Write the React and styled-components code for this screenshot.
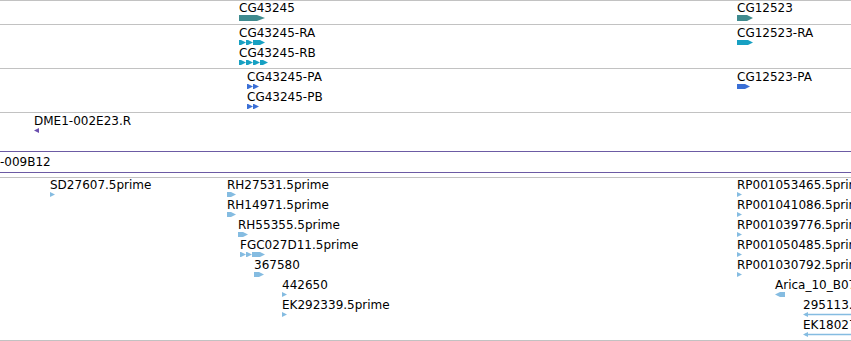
import React from 'react';
import styled, { createGlobalStyle } from 'styled-components';

const GlobalStyle = createGlobalStyle`
  html, body {
    margin: 0;
    padding: 0;
    background: #fff;
  }
  body {
    font-family: "DejaVu Sans", "Liberation Sans", sans-serif;
  }
`;

const TEAL = '#3f8b8f';
const CYAN = '#17a0c2';
const BLUE = '#3a6fd6';
const PURPLE = '#6a4eae';
const EST = '#85bce1';

const Browser = styled.div`
  width: 851px;
  height: 341px;
  overflow: hidden;
  border-top: 1px solid #c2c2c2;
  box-sizing: border-box;
  display: flex;
  flex-direction: column;
  background: #fff;
`;

const Track = styled.div`
  position: relative;
  flex: none;
  height: ${(p) => p.$h}px;
  border-bottom: 1px solid #c2c2c2;
  overflow: hidden;
`;

const Feature = styled.div`
  position: absolute;
  display: flex;
  flex-direction: column;
  align-items: flex-start;
`;

const Label = styled.span`
  font-size: 12px;
  line-height: 14px;
  color: #000;
  white-space: nowrap;
`;

const CloneBar = styled.div`
  position: absolute;
  top: 38px;
  left: 0;
  right: 0;
  height: 20px;
  border-top: 1px solid #6c5ba4;
  border-bottom: 1px solid #6c5ba4;
  font-size: 12px;
  line-height: 20px;
  color: #000;
  white-space: nowrap;
`;

// exon-ish segments: [x, width] relative to feature start
function Glyph({ segs, h = 5, color, dir = 1, tip = 5, line }) {
  const w = line || Math.max(...segs.map(([x, l]) => x + l));
  const m = h / 2;
  return (
    <svg width={w} height={h} style={{ display: 'block' }}>
      {line && <rect x={2} y={m - 0.75} width={w} height={1.5} fill={color} />}
      {segs.map(([x, l], i) => {
        const t = Math.min(tip, l);
        const pts =
          dir > 0
            ? `${x},0 ${x + l - t},0 ${x + l},${m} ${x + l - t},${h} ${x},${h}`
            : `${x + l},0 ${x + t},0 ${x},${m} ${x + t},${h} ${x + l},${h}`;
        return <polygon key={i} points={pts} fill={color} />;
      })}
    </svg>
  );
}

const tracks = [
  {
    h: 23,
    off: 0,
    features: [
      { x: 239, row: 0, label: 'CG43245', segs: [[0, 26]], color: TEAL, gh: 6, tip: 8 },
      { x: 737, row: 0, label: 'CG12523', segs: [[0, 16]], color: TEAL, gh: 6, tip: 6 },
    ],
  },
  {
    h: 43,
    off: 1,
    features: [
      { x: 239, row: 0, label: 'CG43245-RA', segs: [[0, 7], [7, 7], [14, 12]], color: CYAN },
      { x: 239, row: 1, label: 'CG43245-RB', segs: [[0, 7], [7, 7], [14, 7], [21, 8]], color: CYAN },
      { x: 737, row: 0, label: 'CG12523-RA', segs: [[0, 16]], color: CYAN },
    ],
  },
  {
    h: 43,
    off: 1,
    features: [
      { x: 247, row: 0, label: 'CG43245-PA', segs: [[0, 6], [6, 6]], color: BLUE },
      { x: 247, row: 1, label: 'CG43245-PB', segs: [[0, 6], [6, 6]], color: BLUE },
      { x: 737, row: 0, label: 'CG12523-PA', segs: [[0, 13]], color: BLUE },
    ],
  },
  {
    h: 64,
    off: 1,
    clone: '-009B12',
    features: [
      { x: 34, row: 0, label: 'DME1-002E23.R', segs: [[0, 5]], color: PURPLE, dir: -1 },
    ],
  },
  {
    h: 162,
    off: 0,
    features: [
      { x: 50, row: 0, label: 'SD27607.5prime', segs: [[0, 5]], color: EST },
      { x: 227, row: 0, label: 'RH27531.5prime', segs: [[0, 9]], color: EST },
      { x: 227, row: 1, label: 'RH14971.5prime', segs: [[0, 9]], color: EST },
      { x: 238, row: 2, label: 'RH55355.5prime', segs: [[0, 10]], color: EST },
      { x: 240, row: 3, label: 'FGC027D11.5prime', segs: [[0, 6], [6, 6], [12, 13]], color: EST },
      { x: 254, row: 4, label: '367580', segs: [[0, 10]], color: EST },
      { x: 282, row: 5, label: '442650', segs: [[0, 5]], color: EST },
      { x: 282, row: 6, label: 'EK292339.5prime', segs: [[0, 5]], color: EST },
      { x: 737, row: 0, label: 'RP001053465.5prime', segs: [[0, 5]], color: EST },
      { x: 737, row: 1, label: 'RP001041086.5prime', segs: [[0, 5]], color: EST },
      { x: 737, row: 2, label: 'RP001039776.5prime', segs: [[0, 5]], color: EST },
      { x: 737, row: 3, label: 'RP001050485.5prime', segs: [[0, 5]], color: EST },
      { x: 737, row: 4, label: 'RP001030792.5prime', segs: [[0, 5]], color: EST },
      { x: 775, row: 5, label: 'Arica_10_B07.3prime', segs: [[0, 10]], color: EST, dir: -1 },
      { x: 803, row: 6, label: '295113.5prime', segs: [[0, 5]], color: EST, dir: -1, line: 80 },
      { x: 803, row: 7, label: 'EK180276.5prime', segs: [[0, 5]], color: EST, dir: -1, line: 80 },
    ],
  },
];

export default function App() {
  return (
    <>
      <GlobalStyle />
      <Browser>
        {tracks.map((track, ti) => (
          <Track key={ti} $h={track.h}>
            {track.clone && <CloneBar>{track.clone}</CloneBar>}
            {track.features.map((f) => (
              <Feature
                key={f.label}
                style={{ left: f.x, top: f.row * 20 + track.off }}
              >
                <Label>{f.label}</Label>
                <Glyph
                  segs={f.segs}
                  color={f.color}
                  h={f.gh || 5}
                  tip={f.tip || 5}
                  dir={f.dir || 1}
                  line={f.line}
                />
              </Feature>
            ))}
          </Track>
        ))}
      </Browser>
    </>
  );
}
